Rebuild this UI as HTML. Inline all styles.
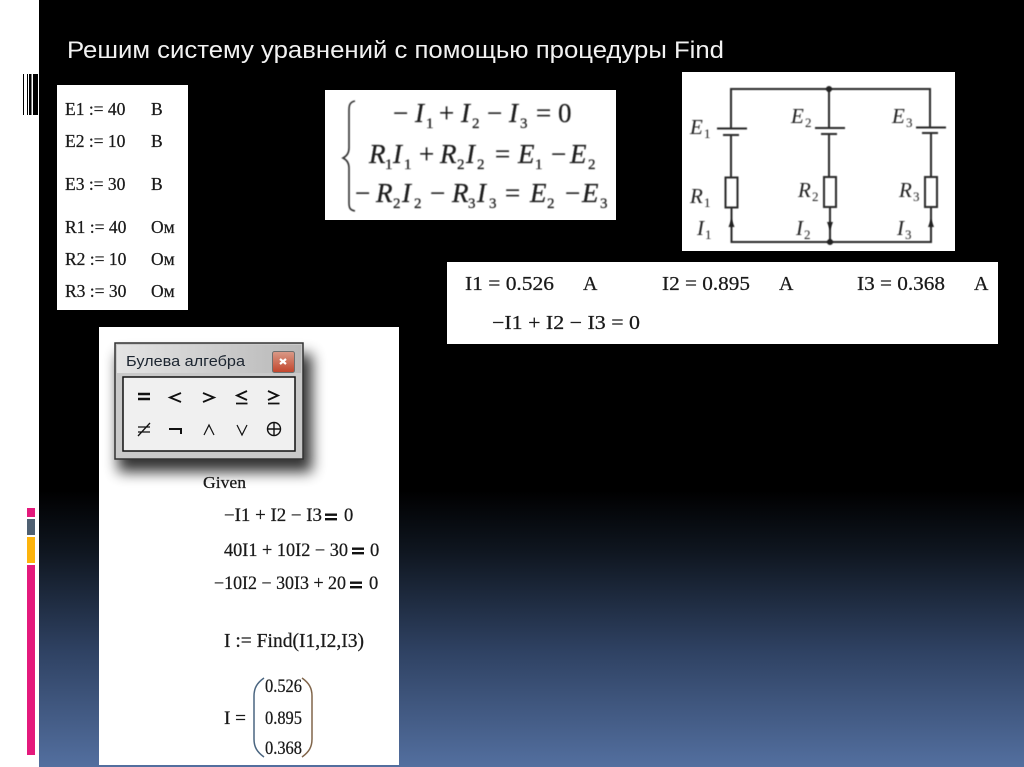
<!DOCTYPE html>
<html lang="ru"><head><meta charset="utf-8"><title>Решим систему уравнений</title>
<style>
html,body{margin:0;padding:0;width:1024px;height:767px;overflow:hidden;background:#fff}
svg{display:block}
text{font-family:"Liberation Serif",serif;fill:#1a1a1a}
.s{font-family:"Liberation Sans",sans-serif}
.i{font-style:italic}
.t{stroke:#1a1a1a;stroke-width:.25px}
.m{font-size:17.5px}
.c{font-size:20px}
.f{font-size:18.5px}
.e{font-size:27px}
.el{font-size:15px}
.r{font-size:21px;font-style:italic}
.rs{font-size:13px}
</style></head><body>
<svg width="1024" height="767" viewBox="0 0 1024 767" xmlns="http://www.w3.org/2000/svg">
<defs>
<linearGradient id="bg" x1="0" y1="0" x2="0" y2="1">
<stop offset="0" stop-color="#000"/><stop offset=".64" stop-color="#000"/><stop offset=".72" stop-color="#0f1620"/><stop offset=".85" stop-color="#2f4263"/><stop offset="1" stop-color="#536f9f"/>
</linearGradient>
<linearGradient id="tb" x1="0" y1="0" x2="1" y2="0"><stop offset="0" stop-color="#e4e4e4"/><stop offset="1" stop-color="#b8b8b8"/></linearGradient>
<linearGradient id="cl" x1="0" y1="0" x2="0" y2="1"><stop offset="0" stop-color="#d99a88"/><stop offset="1" stop-color="#c2452c"/></linearGradient>
<filter id="sh" x="-30%" y="-30%" width="160%" height="160%"><feGaussianBlur stdDeviation="7"/></filter>
<filter id="b" x="-5%" y="-5%" width="110%" height="110%"><feGaussianBlur stdDeviation=".45"/></filter>
</defs>
<rect width="1024" height="767" fill="#fff"/>
<rect x="39" y="0" width="985" height="767" fill="url(#bg)"/>
<!-- left decorations -->
<g fill="#000"><rect x="23" y="74" width="1" height="41"/><rect x="27" y="74" width="1" height="41"/><rect x="29" y="74" width="2.5" height="41"/><rect x="33" y="74" width="5" height="41"/></g>
<rect x="27" y="508" width="8" height="9" fill="#e4197c"/>
<rect x="27" y="519" width="8" height="16" fill="#4f6072"/>
<rect x="27" y="537" width="8" height="26" fill="#fdb40c"/>
<rect x="27" y="565" width="8" height="190" fill="#e4197c"/>
<!-- title -->
<text class="s" x="67" y="58" font-size="24" style="fill:#f2f2f2" textLength="657" lengthAdjust="spacingAndGlyphs">Решим систему уравнений с помощью процедуры Find</text>
<!-- values box -->
<rect x="57" y="85" width="131" height="225" fill="#fff"/>
<g class="t">
<text class="m" x="65" y="115">E1 := 40</text><text class="m" x="151" y="115">В</text>
<text class="m" x="65" y="147">E2 := 10</text><text class="m" x="151" y="147">В</text>
<text class="m" x="65" y="190">E3 := 30</text><text class="m" x="151" y="190">В</text>
<text class="m" x="65" y="233">R1 := 40</text><text class="m" x="151" y="233">Ом</text>
<text class="m" x="65" y="265">R2 := 10</text><text class="m" x="151" y="265">Ом</text>
<text class="m" x="65" y="297">R3 := 30</text><text class="m" x="151" y="297">Ом</text>
</g>
<!-- equations box -->
<rect x="325" y="90" width="291" height="130" fill="#fff"/>
<g filter="url(#b)" class="t">
<path d="M355 101C350 102 349 105 349 110V148C349 153 347 156 343 158C347 160 349 163 349 168V203C349 208 350 210 355 211" fill="none" stroke="#333" stroke-width="1.600"/>
<text class="e" x="393" y="122">−</text><text class="e i" x="415" y="122">I</text><text class="el" x="426" y="128">1</text><text class="e" x="439" y="122">+</text><text class="e i" x="461" y="122">I</text><text class="el" x="472" y="128">2</text><text class="e" x="487" y="122">−</text><text class="e i" x="509" y="122">I</text><text class="el" x="520" y="128">3</text><text class="e" x="536" y="122">=</text><text class="e" x="558" y="122">0</text>
<text class="e i" x="369" y="163">R</text><text class="el" x="385" y="169">1</text><text class="e i" x="393" y="163">I</text><text class="el" x="404" y="169">1</text><text class="e" x="419" y="163">+</text><text class="e i" x="440" y="163">R</text><text class="el" x="457" y="169">2</text><text class="e i" x="466" y="163">I</text><text class="el" x="477" y="169">2</text><text class="e" x="495" y="163">=</text><text class="e i" x="518" y="163">E</text><text class="el" x="535" y="169">1</text><text class="e" x="551" y="163">−</text><text class="e i" x="570" y="163">E</text><text class="el" x="588" y="169">2</text>
<text class="e" x="355" y="202">−</text><text class="e i" x="376" y="202">R</text><text class="el" x="393" y="208">2</text><text class="e i" x="402" y="202">I</text><text class="el" x="414" y="208">2</text><text class="e" x="430" y="202">−</text><text class="e i" x="452" y="202">R</text><text class="el" x="468" y="208">3</text><text class="e i" x="477" y="202">I</text><text class="el" x="489" y="208">3</text><text class="e" x="505" y="202">=</text><text class="e i" x="530" y="202">E</text><text class="el" x="547" y="208">2</text><text class="e" x="565" y="202">−</text><text class="e i" x="582" y="202">E</text><text class="el" x="600" y="208">3</text>
</g>
<!-- circuit box -->
<rect x="682" y="72" width="273" height="179" fill="#fff"/>
<g filter="url(#b)" stroke="#2a2a2a" stroke-width="2" fill="none">
<path d="M731 128V89H930V127M829 89V128M731 135V177M829 134V177M931 133V177"/>
<path d="M717 128.500h30M723 135h16M815 128h30M821 134h16M916 127.500h30M922 133h16" stroke-width="2"/>
<rect x="725.500" y="177.500" width="12" height="30"/><rect x="824" y="177" width="12" height="30"/><rect x="925" y="177" width="12" height="30"/>
<path d="M731.500 208V242H931V207M830 207V242"/>
</g>
<g fill="#222" filter="url(#b)">
<circle cx="829" cy="89" r="3"/><circle cx="830" cy="242" r="3"/>
<path d="M731.500 219l-3 8h6zM830 230l-3-8h6zM931 219l-3 8h6z"/>
</g>
<g filter="url(#b)">
<text class="r" x="690" y="134">E</text><text class="rs" x="704" y="138">1</text>
<text class="r" x="791" y="123">E</text><text class="rs" x="805" y="127">2</text>
<text class="r" x="892" y="123">E</text><text class="rs" x="906" y="127">3</text>
<text class="r" x="690" y="203">R</text><text class="rs" x="704" y="207">1</text>
<text class="r" x="798" y="197">R</text><text class="rs" x="812" y="201">2</text>
<text class="r" x="899" y="197">R</text><text class="rs" x="913" y="201">3</text>
<text class="r" x="697" y="235">I</text><text class="rs" x="705" y="239">1</text>
<text class="r" x="796" y="235">I</text><text class="rs" x="804" y="239">2</text>
<text class="r" x="897" y="235">I</text><text class="rs" x="905" y="239">3</text>
</g>
<!-- results box -->
<rect x="447" y="262" width="551" height="82" fill="#fff"/>
<g class="t">
<text class="c" x="465" y="290" textLength="89" lengthAdjust="spacingAndGlyphs">I1 = 0.526</text><text class="c" x="583" y="290">A</text>
<text class="c" x="662" y="290" textLength="88" lengthAdjust="spacingAndGlyphs">I2 = 0.895</text><text class="c" x="779" y="290">A</text>
<text class="c" x="857" y="290" textLength="88" lengthAdjust="spacingAndGlyphs">I3 = 0.368</text><text class="c" x="974" y="290">A</text>
<text class="c" x="492" y="329" textLength="148" lengthAdjust="spacingAndGlyphs">−I1 + I2 − I3 = 0</text>
</g>
<!-- Find box -->
<rect x="99" y="327" width="300" height="438" fill="#fff"/>
<rect x="118" y="354" width="194" height="118" fill="#000" opacity=".8" filter="url(#sh)"/>
<rect x="115" y="343" width="188" height="116" fill="#c9c9c9" stroke="#333" stroke-width="1.500"/>
<rect x="117" y="345" width="184" height="28" fill="url(#tb)"/>
<text class="s" x="126" y="366" font-size="15" textLength="119" lengthAdjust="spacingAndGlyphs" style="fill:#1c2530">Булева алгебра</text>
<rect x="272.500" y="351.500" width="22" height="21" rx="2" fill="url(#cl)" stroke="#6f6f6f"/>
<path d="M280 359l6 5M286 359l-6 5" stroke="#fff" stroke-width="2.200"/>
<rect x="123" y="377" width="172" height="74" fill="#f0f0f0" stroke="#111" stroke-width="1.500"/>
<g stroke="#111" fill="none" stroke-width="1.800">
<path d="M138 394h12M138 399h12" stroke-width="2.600"/>
<path d="M181 393l-11 4.500 11 4.500M203 393l11 4.500-11 4.500"/>
<path d="M247 391l-10 4.500 10 4.500M236 403.500h11.500M268 391l10 4.500-10 4.500M268 403.500h11.500"/>
<path d="M138 427h12M138 432h12M150 423l-12 13" stroke-width="1.300"/>
<path d="M169 429h12v5" stroke-width="2"/>
<path d="M204 435l5-10 5 10M237 425l5 10 5-10" stroke-width="1.200"/>
<circle cx="274" cy="429" r="6.500" stroke-width="1.400"/><path d="M267 429h14M274 422v14" stroke-width="1.400"/>
</g>
<g class="t">
<text x="203" y="488" font-size="17" textLength="43" lengthAdjust="spacingAndGlyphs">Given</text>
<text class="f" x="224" y="521" textLength="98" lengthAdjust="spacingAndGlyphs">−I1 + I2 − I3</text><text class="f" x="344" y="521">0</text>
<text class="f" x="224" y="556" textLength="124" lengthAdjust="spacingAndGlyphs">40I1 + 10I2 − 30</text><text class="f" x="370" y="556">0</text>
<text class="f" x="214" y="589" textLength="132" lengthAdjust="spacingAndGlyphs">−10I2 − 30I3 + 20</text><text class="f" x="369" y="589">0</text>
<text x="224" y="647" font-size="20" textLength="140" lengthAdjust="spacingAndGlyphs">I := Find(I1,I2,I3)</text>
<text x="224" y="724" font-size="19" textLength="22" lengthAdjust="spacingAndGlyphs">I =</text>
<text class="f" x="265" y="692" textLength="37" lengthAdjust="spacingAndGlyphs">0.526</text>
<text class="f" x="265" y="724" textLength="37" lengthAdjust="spacingAndGlyphs">0.895</text>
<text class="f" x="265" y="754" textLength="37" lengthAdjust="spacingAndGlyphs">0.368</text>
</g>
<g fill="#111">
<rect x="325" y="513.500" width="12" height="2.400"/><rect x="325" y="518" width="12" height="2.400"/>
<rect x="352" y="547.500" width="12" height="2.400"/><rect x="352" y="552" width="12" height="2.400"/>
<rect x="350" y="581.500" width="12" height="2.400"/><rect x="350" y="586" width="12" height="2.400"/>
</g>
<path d="M264 678C257 683 254 688 254 696V739C254 747 257 752 264 757" fill="none" stroke="#4a6580" stroke-width="1.500"/>
<path d="M302 678C309 683 312 688 312 696V739C312 747 309 752 302 757" fill="none" stroke="#80654a" stroke-width="1.500"/>
</svg>
</body></html>
